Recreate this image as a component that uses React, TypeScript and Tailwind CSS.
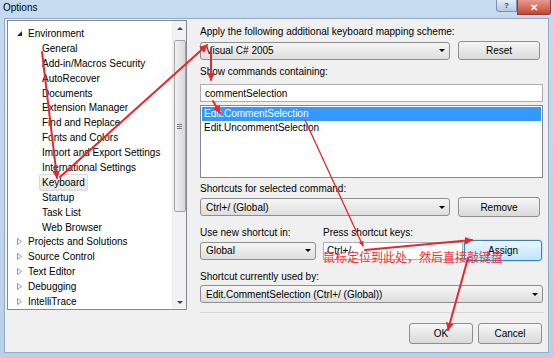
import React from "react";

const font = { fontFamily: '"Liberation Sans", Arial, sans-serif' };

const treeItems: { label: string; level: number; kind?: "open" | "closed"; selected?: boolean }[] = [
  { label: "Environment", level: 0, kind: "open" },
  { label: "General", level: 1 },
  { label: "Add-in/Macros Security", level: 1 },
  { label: "AutoRecover", level: 1 },
  { label: "Documents", level: 1 },
  { label: "Extension Manager", level: 1 },
  { label: "Find and Replace", level: 1 },
  { label: "Fonts and Colors", level: 1 },
  { label: "Import and Export Settings", level: 1 },
  { label: "International Settings", level: 1 },
  { label: "Keyboard", level: 1, selected: true },
  { label: "Startup", level: 1 },
  { label: "Task List", level: 1 },
  { label: "Web Browser", level: 1 },
  { label: "Projects and Solutions", level: 0, kind: "closed" },
  { label: "Source Control", level: 0, kind: "closed" },
  { label: "Text Editor", level: 0, kind: "closed" },
  { label: "Debugging", level: 0, kind: "closed" },
  { label: "IntelliTrace", level: 0, kind: "closed" },
];

function Combo({ text, className }: { text: string; className: string }) {
  return (
    <div
      className={`flex items-center justify-between rounded-[3px] border border-[#8e8f8f] bg-gradient-to-b from-[#f6f6f6] to-[#dedede] pl-[5px] pr-[4px] text-[10px] text-black ${className}`}
    >
      <span>{text}</span>
      <span className="h-0 w-0 border-x-[3px] border-t-[3px] border-x-transparent border-t-black" />
    </div>
  );
}

function Btn({ text, className }: { text: string; className: string }) {
  return (
    <div
      className={`flex items-center justify-center rounded-[3px] border border-[#8e8f8f] bg-gradient-to-b from-[#f6f6f6] to-[#dadada] text-[10px] text-black ${className}`}
    >
      {text}
    </div>
  );
}

function Arrows() {
  return (
    <svg className="pointer-events-none absolute left-0 top-0" width="554" height="358" viewBox="0 0 554 358">
      <defs>
        <marker id="ah" viewBox="0 0 10 10" refX="9" refY="5" markerWidth="4" markerHeight="4" orient="auto">
          <path d="M0 0 L10 5 L0 10 z" fill="#e8262d" />
        </marker>
      </defs>
      <g stroke="#e8262d" strokeLinecap="round" fill="none">
        <line x1="42" y1="52" x2="57" y2="178" strokeWidth="2" markerEnd="url(#ah)" />
        <line x1="60" y1="177" x2="207" y2="45" strokeWidth="2" markerEnd="url(#ah)" />
        <line x1="211" y1="48" x2="211" y2="80" strokeWidth="2" markerEnd="url(#ah)" />
        <line x1="213" y1="101" x2="220" y2="113" strokeWidth="2" markerEnd="url(#ah)" />
        <line x1="305" y1="120" x2="363" y2="246" strokeWidth="1.3" markerEnd="url(#ah)" />
        <line x1="365" y1="250" x2="472" y2="240" strokeWidth="2" markerEnd="url(#ah)" />
        <line x1="468" y1="258" x2="448" y2="330" strokeWidth="2" markerEnd="url(#ah)" />
      </g>
    </svg>
  );
}

export default function App() {
  return (
    <div className="relative h-[358px] w-[554px] overflow-hidden bg-gradient-to-b from-[#c6dbef] to-[#b9d0e9]" style={font}>
      {/* title bar */}
      <div className="flex h-[18px] items-start justify-between">
        <span className="pl-[3px] pt-[2px] text-[10px] leading-[12px] text-black">Options</span>
        <div className="mr-[3px] flex">
          <div className="flex h-[12px] w-[21px] items-center justify-center rounded-bl-[3px] border border-t-0 border-[#7b93b0] bg-gradient-to-b from-[#e4edf6] to-[#b7cbe2] text-[8px] font-bold text-[#3c4e66]">
            ?
          </div>
          <div className="flex h-[15px] w-[34px] items-center justify-center rounded-br-[3px] border border-t-0 border-[#8a3b3b] bg-gradient-to-b from-[#e59a8c] to-[#c8412f] text-[10px] font-bold text-white">
            ✕
          </div>
        </div>
      </div>

      {/* client area */}
      <div className="ml-[4px] mr-[5px] h-[335px] border border-[#96a9c2] bg-[#f0f0f0]">
        <div className="flex pl-[2px] pt-[1px]">
          {/* tree */}
          <div className="relative flex h-[290px] w-[180px] border border-[#828790] bg-white">
            <div className="flex-1 pt-[5px]">
              {treeItems.map((it) => (
                <div key={it.label} className="flex h-[14.9px] items-center text-[10px] text-black">
                  {it.level === 0 ? (
                    <div className="flex items-center">
                      <span className="ml-[9px] flex w-[11px] items-center">
                        {it.kind === "open" ? (
                          <span className="h-0 w-0 border-b-[5px] border-l-[5px] border-b-[#262626] border-l-transparent" />
                        ) : (
                          <svg width="5" height="7" viewBox="0 0 5 7">
                            <path d="M0.5 0.5 L4.5 3.5 L0.5 6.5 z" fill="none" stroke="#8f8f8f" strokeWidth="0.9" />
                          </svg>
                        )}
                      </span>
                      <span>{it.label}</span>
                    </div>
                  ) : (
                    <span
                      className={`ml-[31px] px-[2px] ${
                        it.selected ? "rounded-[2px] border border-[#d9d9d9] bg-gradient-to-b from-[#f8f8f8] to-[#e5e5e5]" : "border border-transparent"
                      }`}
                    >
                      {it.label}
                    </span>
                  )}
                </div>
              ))}
            </div>
            {/* scrollbar */}
            <div className="flex w-[14px] flex-col items-center border-l border-[#ececec] bg-[#f2f2f2]">
              <div className="flex h-[14px] items-center justify-center">
                <span className="h-0 w-0 border-x-[3px] border-b-[3px] border-x-transparent border-b-[#404040]" />
              </div>
              <div className="mt-[5px] flex h-[172px] w-[12px] flex-col items-center justify-center gap-[1px] rounded-[2px] border border-[#a5a5a5] bg-gradient-to-r from-[#f0f0f0] to-[#d8d8d8]">
                <span className="h-px w-[5px] bg-[#777]" />
                <span className="h-px w-[5px] bg-[#777]" />
                <span className="h-px w-[5px] bg-[#777]" />
              </div>
              <div className="flex-1" />
              <div className="flex h-[14px] items-center justify-center">
                <span className="h-0 w-0 border-x-[3px] border-t-[3px] border-x-transparent border-t-[#404040]" />
              </div>
            </div>
          </div>

          {/* right pane */}
          <div className="ml-[13px] flex w-[344px] flex-col text-[10px] text-black">
            <div className="mt-[6px] h-[12px] leading-[12px]">Apply the following additional keyboard mapping scheme:</div>
            <div className="mt-[3px] flex items-center gap-[8px]">
              <Combo text="Visual C# 2005" className="h-[18px] w-[250px]" />
              <Btn text="Reset" className="h-[19px] w-[82px]" />
            </div>
            <div className="mt-[6px] h-[12px] leading-[12px]">Show commands containing:</div>
            <div className="mt-[6px] flex h-[18px] w-[343px] items-center border border-[#abadb3] bg-white pl-[4px]">commentSelection</div>
            <div className="mt-[3px] h-[73px] w-[343px] border border-[#828790] bg-white p-px">
              <div className="h-[14px] bg-[#3399ff] pl-[2px] leading-[14px] text-white">Edit.CommentSelection</div>
              <div className="h-[14px] pl-[2px] leading-[14px]">Edit.UncommentSelection</div>
            </div>
            <div className="mt-[5px] h-[12px] leading-[12px]">Shortcuts for selected command:</div>
            <div className="mt-[2px] flex items-center gap-[8px]">
              <Combo text="Ctrl+/ (Global)" className="h-[18px] w-[250px]" />
              <Btn text="Remove" className="h-[20px] w-[82px]" />
            </div>
            <div className="mt-[10px] flex h-[12px] leading-[12px]">
              <span className="w-[123px]">Use new shortcut in:</span>
              <span>Press shortcut keys:</span>
            </div>
            <div className="relative mt-[1px] flex items-center">
              <Combo text="Global" className="h-[18px] w-[116px]" />
              <div className="ml-[7px] flex h-[18px] w-[140px] items-center border border-[#abadb3] bg-white pl-[3px]">Ctrl+/</div>
              <div className="ml-[1px] flex h-[21px] w-[78px] items-center justify-center rounded-[3px] border border-[#3c7fb1] bg-gradient-to-b from-[#eaf6fd] to-[#bee6fd] shadow-[0_0_2px_#6fc3f0]">
                Assign
              </div>
              <span
                className="absolute left-[123px] top-[10px] text-[12px] leading-[14px] text-[#e8323a]"
                style={{ fontFamily: '"Noto Sans CJK SC", sans-serif' }}
              >
                鼠标定位到此处，然后直接敲键盘
              </span>
            </div>
            <div className="mt-[10px] h-[12px] leading-[12px]">Shortcut currently used by:</div>
            <Combo text="Edit.CommentSelection (Ctrl+/ (Global))" className="mt-[2px] h-[18px] w-[343px]" />
            <div className="mt-[9px] h-px w-[344px] border-t border-[#d5d5d5] bg-white" />
            <div className="mt-[10px] flex justify-end gap-[5px] pr-[2px]">
              <Btn text="OK" className="h-[21px] w-[64px]" />
              <Btn text="Cancel" className="h-[21px] w-[64px]" />
            </div>
          </div>
        </div>
      </div>
      <Arrows />
    </div>
  );
}
